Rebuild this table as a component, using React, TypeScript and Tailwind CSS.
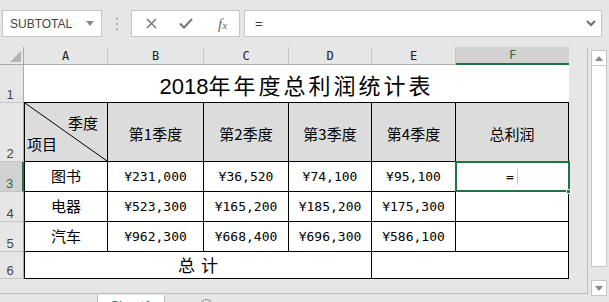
import React from "react";

const CJK = { fontFamily: '"Noto Sans CJK SC", "Noto Sans", sans-serif' };
const MONO = { fontFamily: '"DejaVu Sans Mono", "Liberation Mono", monospace' };

const COLS = ["A", "B", "C", "D", "E", "F"];

const rows = [
  { n: 3, name: "图书", q: ["¥231,000", "¥36,520", "¥74,100", "¥95,100"] },
  { n: 4, name: "电器", q: ["¥523,300", "¥165,200", "¥185,200", "¥175,300"] },
  { n: 5, name: "汽车", q: ["¥962,300", "¥668,400", "¥696,300", "¥586,100"] },
];

function RowHead({ n, active }: { n: number; active?: boolean }) {
  return (
    <div
      className={
        "flex items-end justify-center pr-[3px] pb-[1px] text-[13px] leading-none " +
        (active
          ? "bg-[#d2d2d2] text-[#217346] border-r-2 border-[#217346] border-b border-b-[#c6c6c6]"
          : "text-[#444] border-r border-[#ababab] border-b border-b-[#c6c6c6]")
      }
      style={{ fontFamily: '"Liberation Sans", sans-serif' }}
    >
      {n}
    </div>
  );
}

function FormulaBar() {
  return (
    <div className="flex items-start h-[47px] pt-[10px]">
      <div className="ml-[2px] w-[100px] h-[27px] bg-white border border-[#c6c6c6] flex items-center justify-between pl-[7px] pr-[7px]">
        <span className="text-[12px] text-[#444]" style={{ fontFamily: '"Liberation Sans", sans-serif' }}>
          SUBTOTAL
        </span>
        <svg width="8" height="5" viewBox="0 0 8 5">
          <path d="M0 0h8L4 5z" fill="#8a8a8a" />
        </svg>
      </div>
      <div className="ml-[14px] mt-[8px] flex flex-col gap-[3px]">
        <span className="w-[2px] h-[2px] bg-[#b5b5b5]" />
        <span className="w-[2px] h-[2px] bg-[#b5b5b5]" />
        <span className="w-[2px] h-[2px] bg-[#b5b5b5]" />
      </div>
      <div className="ml-[13px] w-[109px] h-[27px] bg-white border border-[#c6c6c6] flex items-center">
        <svg className="ml-[14px]" width="11" height="11" viewBox="0 0 11 11">
          <path d="M1 1l9 9M10 1l-9 9" stroke="#7a7a7a" strokeWidth="1.6" />
        </svg>
        <svg className="ml-[22px]" width="14" height="11" viewBox="0 0 14 11">
          <path d="M1 5.5l4 4L13 1" stroke="#7a7a7a" strokeWidth="2.2" fill="none" />
        </svg>
        <span
          className="ml-[25px] text-[#6a6a6a] italic leading-none"
          style={{ fontFamily: '"Liberation Serif", serif' }}
        >
          <span className="text-[15px]">f</span>
          <span className="text-[11px]">x</span>
        </span>
      </div>
      <div className="ml-[4px] w-[358px] h-[27px] bg-white border border-[#c6c6c6] flex items-center justify-between pl-[10px] pr-[5px]">
        <span className="text-[13px] text-[#333]" style={{ fontFamily: '"Liberation Sans", sans-serif' }}>
          =
        </span>
        <svg width="10" height="7" viewBox="0 0 10 7">
          <path d="M1 1l4 4 4-4" stroke="#6f6f6f" strokeWidth="2" fill="none" />
        </svg>
      </div>
    </div>
  );
}

function Sheet() {
  const cell = "flex items-center justify-center border-r border-b border-black bg-white";
  return (
    <div
      className="grid grid-cols-[24px_84px_96px_85px_83px_84px_113px] grid-rows-[18px_38px_59px_30px_30px_30px_27px] text-black"
    >
      {/* corner */}
      <div className="relative border-r border-b border-[#ababab]">
        <svg className="absolute right-[2px] bottom-[2px]" width="11" height="11" viewBox="0 0 11 11">
          <path d="M11 0v11H0z" fill="#b4b4b4" />
        </svg>
      </div>
      {COLS.map((c) =>
        c === "F" ? (
          <div
            key={c}
            className="flex items-center justify-center bg-[#d2d2d2] border-b-2 border-[#217346] text-[#217346] text-[12px]"
            style={MONO}
          >
            {c}
          </div>
        ) : (
          <div
            key={c}
            className="flex items-center justify-center border-r border-[#c6c6c6] border-b border-b-[#ababab] text-[#222] text-[12px]"
            style={MONO}
          >
            {c}
          </div>
        )
      )}

      {/* row 1: merged title */}
      <RowHead n={1} />
      <div className="col-span-6 bg-white border-b border-black flex items-center justify-center pt-[3px]">
        <span className="text-[22px] tracking-[3px] leading-none" style={CJK}>
          <span style={{ fontFamily: '"Liberation Sans", sans-serif' }} className="tracking-normal">2018</span>
          年年度总利润统计表
        </span>
      </div>

      {/* row 2: headers */}
      <RowHead n={2} />
      <div className="relative bg-[#dcdcdc] border-l border-r border-b border-black text-[15px]" style={CJK}>
        <svg className="absolute inset-0 w-full h-full" viewBox="0 0 100 100" preserveAspectRatio="none">
          <line x1="0" y1="0" x2="100" y2="100" stroke="#000" strokeWidth="1" vectorEffect="non-scaling-stroke" />
        </svg>
        <span className="absolute left-[43px] top-[12px] leading-none">季度</span>
        <span className="absolute left-[2px] top-[33px] leading-none">项目</span>
      </div>
      {["第1季度", "第2季度", "第3季度", "第4季度", "总利润"].map((t) => (
        <div key={t} className="flex items-center justify-center pt-[4px] bg-[#dcdcdc] border-r border-b border-black text-[15px]" style={CJK}>
          {t}
        </div>
      ))}

      {/* rows 3-5: data */}
      {rows.map((r) => (
        <React.Fragment key={r.n}>
          <RowHead n={r.n} active={r.n === 3} />
          <div className={cell + " border-l text-[15px]"} style={CJK}>
            {r.name}
          </div>
          {r.q.map((v, i) => (
            <div key={i} className={cell + " text-[13px]"} style={MONO}>
              {v}
            </div>
          ))}
          {r.n === 3 ? (
            <div className={cell + " relative"}>
              <div className="absolute -left-[1px] -top-[1px] right-[-2px] bottom-[-1px] border-2 border-[#217346]" />
              <div className="absolute right-[-3px] bottom-[-3px] w-[5px] h-[5px] bg-[#217346] border border-white" />
              <span className="text-[13px]" style={MONO}>=</span>
              <span className="ml-[3px] w-px h-[16px] bg-[#c8c8c8]" />
            </div>
          ) : (
            <div className={cell} />
          )}
        </React.Fragment>
      ))}

      {/* row 6: total */}
      <RowHead n={6} />
      <div className={cell + " col-span-4 border-l text-[17px] tracking-[6px] pl-[6px]"} style={CJK}>
        总计
      </div>
      <div className={cell + " col-span-2"} />
    </div>
  );
}

export default function App() {
  return (
    <div className="w-[609px] h-[302px] overflow-hidden bg-[#e6e6e6]">
      <FormulaBar />
      <div className="flex">
        <div className="w-[588px] h-[247px] border-r border-b border-[#bdbdbd]">
          <Sheet />
        </div>
        {/* vertical scrollbar */}
        <div className="w-[21px] flex flex-col pl-[3px] pt-[3px]">
          <div className="w-[16px] h-[217px] bg-white border border-[#c6c6c6] flex flex-col">
            <div className="h-[15px] border-b border-[#c6c6c6] flex items-center justify-center">
              <svg width="8" height="5" viewBox="0 0 8 5">
                <path d="M4 0l4 5H0z" fill="#8a8a8a" />
              </svg>
            </div>
          </div>
          <div className="h-[13px]" />
          <div className="w-[16px] h-[16px] bg-white border border-[#c6c6c6] flex items-center justify-center">
            <svg width="8" height="5" viewBox="0 0 8 5">
              <path d="M0 0h8L4 5z" fill="#8a8a8a" />
            </svg>
          </div>
        </div>
      </div>
      {/* sheet tabs */}
      <div className="flex h-[8px] relative">
        <div className="w-[97px]" />
        <div className="w-[68px] -mt-[1px] h-[9px] bg-white border-l border-r border-[#bdbdbd] flex justify-center overflow-hidden">
          <span className="text-[13px] text-[#217346] mt-[4px] leading-none" style={{ fontFamily: '"Liberation Sans", sans-serif' }}>
            Sheet1
          </span>
        </div>
        <div className="ml-[35px] mt-[3px] w-[13px] h-[13px] rounded-full border border-[#8a8a8a]" />
        <div className="ml-[169px] mt-[7px] w-[14px] h-[6px] border border-[#c6c6c6] bg-[#f0f0f0]" />
        <div className="mt-[7px] w-[176px] h-[6px] border border-[#c6c6c6] bg-white" />
        <div className="ml-[3px] mt-[7px] w-[14px] h-[6px] border border-[#c6c6c6] bg-[#f0f0f0]" />
      </div>
    </div>
  );
}
